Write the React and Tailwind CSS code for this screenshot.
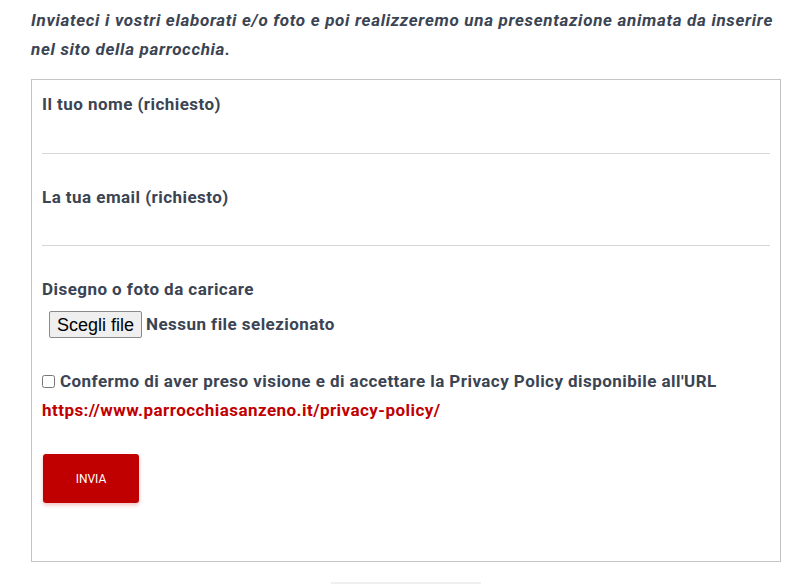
import { useState } from 'react';

export default function App() {
  const [nome, setNome] = useState('');
  const [email, setEmail] = useState('');
  const [ok, setOk] = useState(false);

  return (
    <div className="min-h-[584px] bg-white pl-[31px] pr-[27px] pt-[6px] font-['Roboto',sans-serif] text-[#3b4453]">
      <p className="text-[17px] leading-[29px] font-bold italic tracking-[0.68px]">
        Inviateci i vostri elaborati e/o foto e poi realizzeremo una presentazione animata da inserire nel sito della parrocchia.
      </p>

      <form className="mt-[15px] border border-[#c4c4c4] px-[10px] pt-[12px] pb-[58px] tracking-[0.45px]" onSubmit={(e) => e.preventDefault()}>
        <label className="block text-[17px] leading-[24px] font-bold">Il tuo nome (richiesto)</label>
        <input value={nome} onChange={(e) => setNome(e.target.value)}
          className="block w-full h-[38px] border-b border-[#d6d6d6] outline-none bg-transparent" />

        <label className="block mt-[31px] text-[17px] leading-[24px] font-bold">La tua email (richiesto)</label>
        <input value={email} onChange={(e) => setEmail(e.target.value)}
          className="block w-full h-[37px] border-b border-[#d6d6d6] outline-none bg-transparent" />

        <label className="block mt-[31px] text-[17px] leading-[24px] font-bold">Disegno o foto da caricare</label>
        <div className="mt-[10px] flex items-center gap-[4px] pl-[7px]">
          <button type="button"
            className="h-[27px] px-[7px] bg-[#efefef] border border-[#8a8a8a] rounded-[2px] text-[18px] leading-none tracking-normal text-black font-['Liberation_Sans',Arial,sans-serif]">
            Scegli file
          </button>
          <span className="text-[17px] font-bold">Nessun file selezionato</span>
        </div>

        <div className="mt-[29px] text-[17px] leading-[29px] font-bold">
          <label className="flex items-center gap-[5px]">
            <input type="checkbox" checked={ok} onChange={(e) => setOk(e.target.checked)}
              className="w-[13px] h-[13px] ml-0 accent-[#c00000]" />
            <span>Confermo di aver preso visione e di accettare la Privacy Policy disponibile all'URL</span>
          </label>
          <a href="#" className="block text-[#c00000]">https://www.parrocchiasanzeno.it/privacy-policy/</a>
        </div>

        <button type="submit"
          className="mt-[29px] ml-px w-[96px] h-[49px] bg-[#c00000] rounded-[3px] text-white text-[12px] tracking-normal shadow-[0_2px_4px_rgba(192,0,0,0.25)]">
          INVIA
        </button>
      </form>

      <div className="mt-[20px] ml-[300px] w-[150px] h-[2px] bg-[#efefef]" />
    </div>
  );
}
